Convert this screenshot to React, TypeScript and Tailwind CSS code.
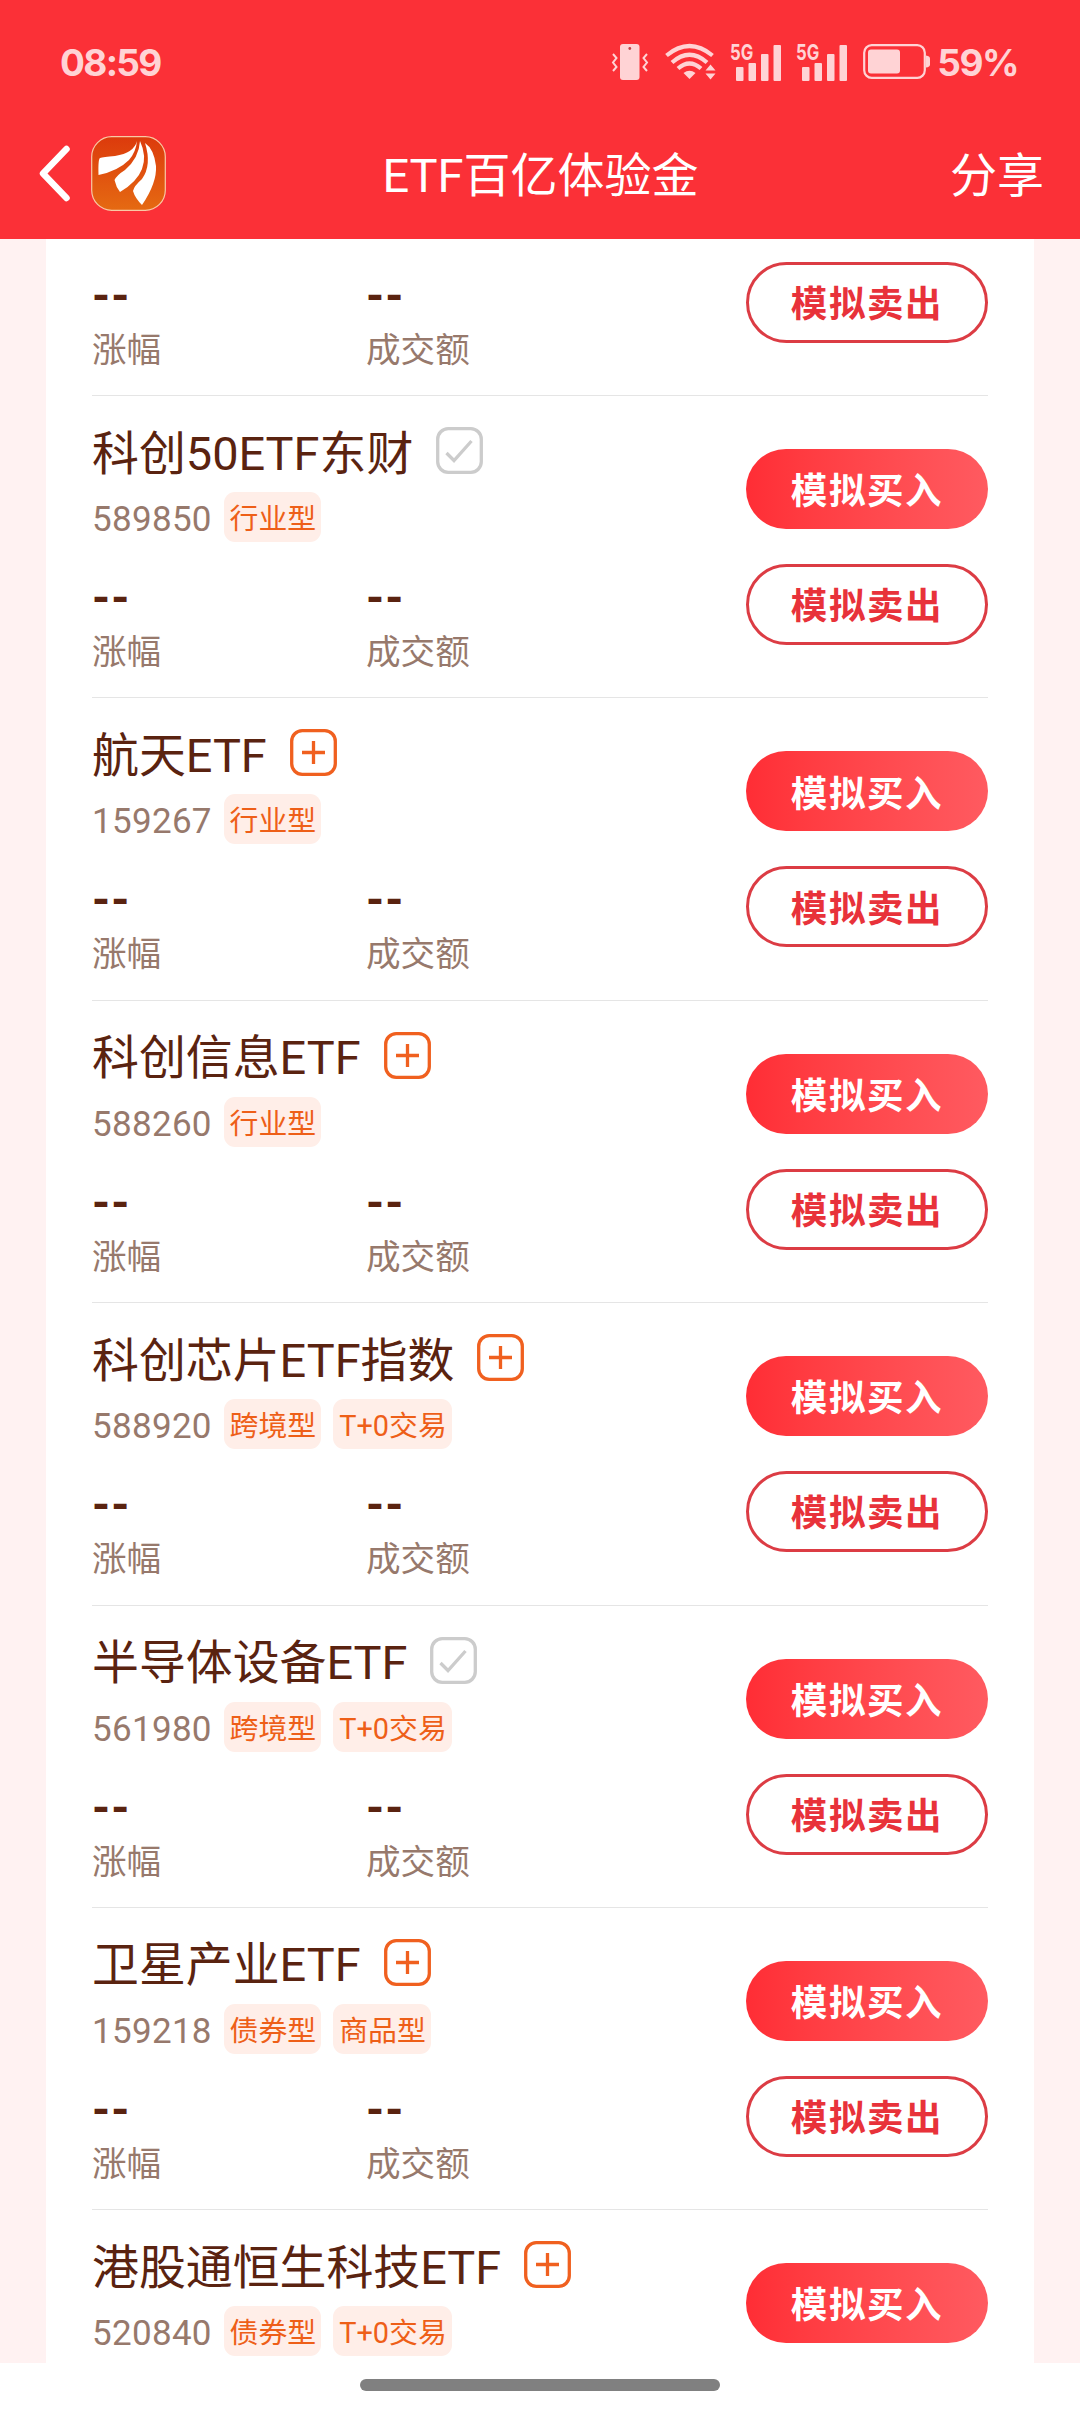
import React from 'react';

type Fund = {
  name: string;
  code: string;
  tags: string[];
  added?: boolean;
};

const funds: Fund[] = [
  { name: '科创50ETF东财', code: '589850', tags: ['行业型'], added: true },
  { name: '航天ETF', code: '159267', tags: ['行业型'] },
  { name: '科创信息ETF', code: '588260', tags: ['行业型'] },
  { name: '科创芯片ETF指数', code: '588920', tags: ['跨境型', 'T+0交易'] },
  { name: '半导体设备ETF', code: '561980', tags: ['跨境型', 'T+0交易'], added: true },
  { name: '卫星产业ETF', code: '159218', tags: ['债券型', '商品型'] },
  { name: '港股通恒生科技ETF', code: '520840', tags: ['债券型', 'T+0交易'] },
];

const Signal: React.FC = () => (
  <div className="relative h-[37px] w-[52px]">
    <svg className="absolute inset-0" width="52" height="37" viewBox="0 0 52 37" fill="#ffd3d5">
      <rect x="6" y="23" width="7.5" height="14" rx="1" />
      <rect x="18.500" y="19" width="7.500" height="18" rx="1" />
      <rect x="31" y="10" width="7.5" height="27" rx="1" />
      <rect x="43.500" y="1" width="7.500" height="36" rx="1" />
    </svg>
    <span className="absolute left-0 top-0 origin-left scale-x-[0.76] text-[22px] font-bold leading-[17px]">5G</span>
  </div>
);

const StatusBar: React.FC = () => (
  <div className="flex h-[124px] items-center justify-between pl-[60px] pr-[62px] font-['Inter','Liberation_Sans',sans-serif] text-[#ffd3d5]">
    <span className="text-[37px] font-bold leading-none tracking-[-1.700px]">08:59</span>
    <div className="flex items-center">
      <svg width="38" height="38" viewBox="0 0 38 38" fill="none">
        <rect x="9" y="1" width="19.500" height="36" rx="3" fill="#ffd3d5" />
        <circle cx="18.800" cy="5.500" r="1.400" fill="#c2434a" />
        <path d="M2 11l3.500 4-3.500 4.500 3.500 4.500-3.500 4M36 11l-3.500 4 3.500 4.500-3.500 4.500 3.500 4" stroke="#ffd3d5" strokeWidth="2" />
      </svg>
      <svg className="ml-[16px]" width="52" height="38" viewBox="0 0 52 38" fill="none" stroke="#ffd3d5" strokeWidth="4.200">
        <path d="M1.500 12.500Q24.500-6.500 47.500 12.500" />
        <path d="M7 19.500Q24.500 4 42 19.500" />
        <path d="M13 25.500Q24.500 15.500 36 25.500" />
        <path d="M24.500 36l-6-6q6-4.500 12 0z" fill="#ffd3d5" stroke="none" />
        <path d="M45.500 21.500l5 6h-10zM45.500 36.500l5-6h-10z" fill="#ffd3d5" stroke="none" />
      </svg>
      <div className="ml-[13px] flex gap-[14px]">
        <Signal />
        <Signal />
      </div>
      <svg className="ml-[15px]" width="68" height="36" viewBox="0 0 68 36" fill="none">
        <rect x="1.200" y="1.200" width="60.600" height="32.600" rx="7.500" stroke="#ffd3d5" strokeWidth="2.200" />
        <rect x="5" y="5.500" width="32" height="24" rx="3" fill="#ffd3d5" />
        <path d="M63 11.500q4 .5 4 3v6q0 2.500-4 3z" fill="#ffd3d5" />
      </svg>
      <span className="ml-[6px] text-[37px] font-bold leading-none tracking-[-1.500px]">59%</span>
    </div>
  </div>
);

const NavBar: React.FC = () => (
  <div className="grid h-[115px] grid-cols-[1fr_auto_1fr] items-center pb-[17px] pl-[37px] pr-[36px] text-[47px] text-white">
    <div className="flex items-center">
      <svg width="34" height="58" viewBox="0 0 34 58" fill="none" stroke="white" strokeWidth="6.500" strokeLinecap="round" strokeLinejoin="round">
        <path d="M29.500 5L6 29.500l23.500 24.500" />
      </svg>
      <svg className="ml-[20px]" width="75" height="75" viewBox="0 0 75 75">
        <defs>
          <linearGradient id="logo" x1="0" y1="0" x2="0" y2="1">
            <stop offset="0" stopColor="#dc3a0c" />
            <stop offset="1" stopColor="#e56a12" />
          </linearGradient>
        </defs>
        <rect x=".7" y=".7" width="73.600" height="73.600" rx="20" fill="url(#logo)" stroke="#f9c9a5" strokeWidth="1.200" />
        <path d="M46 5Q43 17 24 20Q12 21 9 22Q7 23 7.500 39Q27 35 38 24Q45 16 46 5Z" fill="white" />
        <path d="M49 5Q48 22 34 34Q26 39 23.500 44Q25 51 29 56Q46 46 51 33Q56 20 49 5Z" fill="white" />
        <path d="M54 7Q61 29 51 43Q43 50 42 55Q44 62 51 69Q66 47 65 30Q63 13 54 7Z" fill="white" />
      </svg>
    </div>
    <h1 className="pt-[5px] leading-none">ETF百亿体验金</h1>
    <span className="justify-self-end pt-[5px] leading-none">分享</span>
  </div>
);

const WatchIcon: React.FC<{ added?: boolean }> = ({ added }) => (
  <svg className="mb-[3px] shrink-0" width="47" height="47" viewBox="0 0 47 47" fill="none" stroke={added ? '#cccccc' : '#f0601f'} strokeWidth="3.300">
    <rect x="1.700" y="1.700" width="43.600" height="43.600" rx="10.500" />
    {added ? <path d="M10.500 26l7.500 7.500L35.500 14" /> : <path d="M12 23.500h23M23.500 12v23" />}
  </svg>
);

const Stat: React.FC<{ label: string }> = ({ label }) => (
  <div className="flex w-[274px] flex-col">
    <span className="text-[46px] font-bold leading-[53px] tracking-[1px] text-[#5a2310]">--</span>
    <span className="mt-[3px] text-[34.600px] leading-[48px] text-[#97796c]">{label}</span>
  </div>
);

const Stats: React.FC = () => (
  <div className="flex">
    <Stat label="涨幅" />
    <Stat label="成交额" />
  </div>
);

const BuyButton: React.FC = () => (
  <button className="h-[80px] w-[242px] rounded-full bg-linear-to-r from-[#ff2d35] to-[#ff5a60] pt-[7px] text-[36.500px] font-bold tracking-[1.600px] text-white">
    模拟买入
  </button>
);

const SellButton: React.FC = () => (
  <button className="h-[81px] w-[242px] rounded-full border-[3px] border-[#dc3c44] pt-[6px] text-[36.500px] font-bold tracking-[1.600px] text-[#e8323a]">
    模拟卖出
  </button>
);

const FundHeading: React.FC<{ fund: Fund }> = ({ fund }) => (
  <div className="pt-[28px]">
    <div className="flex h-[56px] items-center gap-[23px]">
      <h2 className="pt-[3px] text-[46.900px] leading-[56px] text-[#5a2310]">{fund.name}</h2>
      <WatchIcon added={fund.added} />
    </div>
    <div className="mt-[12px] flex h-[50px] items-center gap-[12px]">
      <span className="w-[119.500px] pt-[5px] text-[35px] leading-none tracking-[0.300px] text-[#97796c]">{fund.code}</span>
      {fund.tags.map((tag) => (
        <span key={tag} className="h-[50px] rounded-[11px] bg-[#ffeee8] pl-[6px] pr-[5px] pt-[2px] text-[28.900px] leading-[50px] text-[#ee5f18]">
          {tag}
        </span>
      ))}
    </div>
  </div>
);

const FundRow: React.FC<{ fund: Fund }> = ({ fund }) => (
  <div className="flex h-[302.400px] shrink-0 justify-between border-b border-[#e5e5e5]">
    <div>
      <FundHeading fund={fund} />
      <div className="mt-[30px]">
        <Stats />
      </div>
    </div>
    <div className="flex flex-col gap-[35px] pt-[53px]">
      <BuyButton />
      <SellButton />
    </div>
  </div>
);

const App: React.FC = () => {
  const fullRows = funds.slice(0, -1);
  const lastFund = funds[funds.length - 1];

  return (
    <div className="flex h-[2412px] w-[1080px] flex-col overflow-hidden bg-white font-['Roboto','Noto_Sans_CJK_SC',sans-serif]">
      <header className="h-[239px] shrink-0 bg-[#fb3037]">
        <StatusBar />
        <NavBar />
      </header>

      <main className="h-[2124px] shrink-0 overflow-hidden bg-[#fff2f2] px-[46px]">
        <div className="h-full bg-white px-[46px]">
          {/* Tail of the row scrolled under the header */}
          <div className="flex h-[157px] justify-between border-b border-[#e5e5e5]">
            <div className="pt-[31px]">
              <Stats />
            </div>
            <div className="pt-[23px]">
              <SellButton />
            </div>
          </div>
          {fullRows.map((fund) => (
            <FundRow key={fund.code} fund={fund} />
          ))}
          {/* Only the top half of the last row fits on screen */}
          <div className="flex justify-between">
            <FundHeading fund={lastFund} />
            <div className="pt-[53px]">
              <BuyButton />
            </div>
          </div>
        </div>
      </main>

      <footer className="flex grow justify-center pt-[16px]">
        <div className="h-[12px] w-[360px] rounded-full bg-[#808080]"></div>
      </footer>
    </div>
  );
};

export default App;
